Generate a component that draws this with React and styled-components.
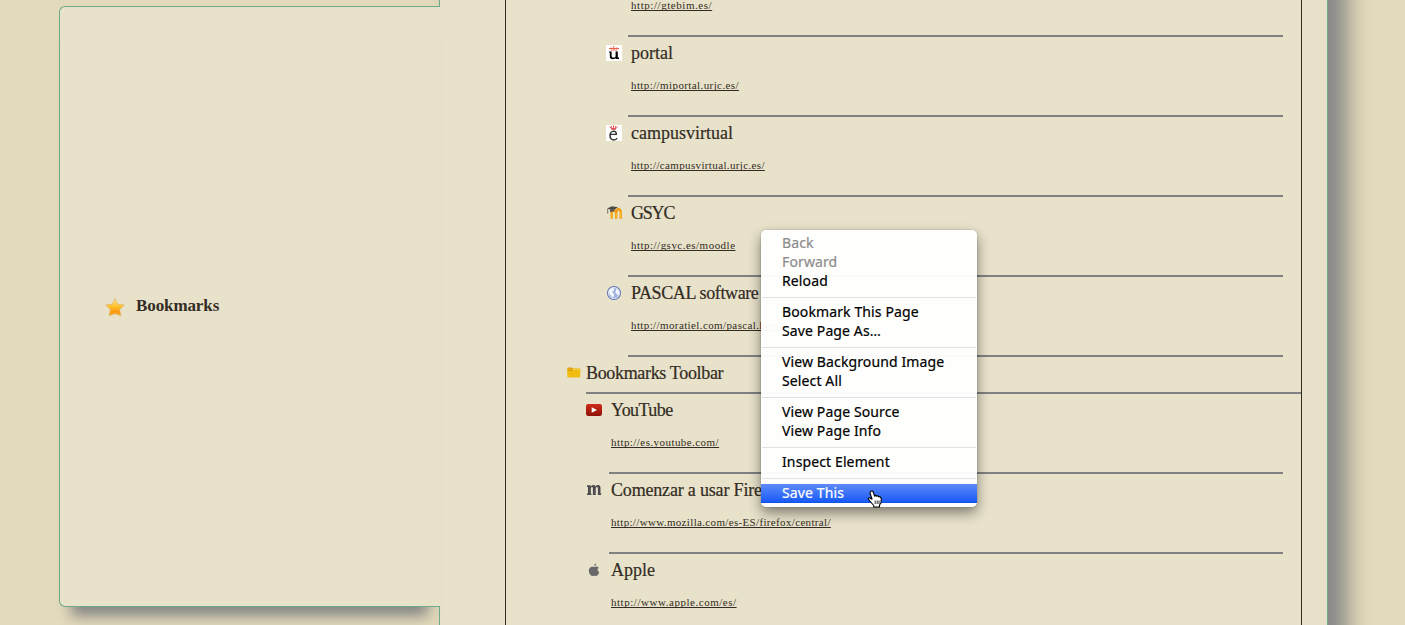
import React from "react";
import styled, { createGlobalStyle } from "styled-components";

const GlobalStyle = createGlobalStyle`
  * { box-sizing: border-box; }
  body {
    margin: 0;
    overflow: hidden;
    background: #e3dabb;
    color: #332c24;
    font-family: "Liberation Serif", serif;
  }
`;

const Page = styled.div`
  display: flex;
  height: 625px;
  padding-left: 59px;
  overflow: hidden;
`;

const SideTab = styled.aside`
  position: relative;
  z-index: 1;
  flex: none;
  display: flex;
  align-items: center;
  gap: 11px;
  width: 381px;
  height: 601px;
  margin: 6px -1px 0 0;
  padding-left: 45px;
  background: #e8e2ca;
  border: 1px solid #6eaa88;
  border-right: 0;
  border-radius: 6px 0 0 6px;
`;

const TabShadow = styled.div`
  position: absolute;
  z-index: 0;
  left: 59px;
  top: 6px;
  width: 381px;
  height: 601px;
  box-shadow: 0 21px 13px -12px #858585;
`;

const TabTitle = styled.h2`
  margin: 0 0 2px;
  font-size: 17px;
  line-height: 20px;
  letter-spacing: -0.1px;
`;

const Sheet = styled.main`
  flex: none;
  width: 889px;
  height: 705px;
  margin-top: -40px;
  padding: 0 25px 0 65px;
  background: #e8e2ca;
  border: 1px solid #6eaa88;
  box-shadow: 19px 0 22px 0 #868686;
`;

const Listing = styled.section`
  height: 100%;
  border: 1px solid #332c20;
  border-width: 0 1px;
  overflow: hidden;
  padding-top: 39px;
`;

const Group = styled.div`
  margin-top: ${(p) => p.$shift || 0}px;
`;

const Entry = styled.div`
  display: flex;
  height: 80px;
  padding: 0 18px 0 ${(p) => p.$indent}px;
`;

const IconCell = styled.div`
  flex: none;
  width: ${(p) => p.$width}px;
  padding-top: ${(p) => p.$top || 8}px;
  padding-left: ${(p) => p.$left || 0}px;
  svg { display: block; }
`;

const EntryBody = styled.div`
  flex: 1;
  padding: 5px 0 0 ${(p) => p.$pad}px;
  border-bottom: 2px solid #808080;
  white-space: nowrap;
`;

const Title = styled.div`
  height: 22px;
  font-size: 18px;
  line-height: 22px;
  letter-spacing: ${(p) => p.$spacing || 0}px;
  -webkit-text-stroke: 0.2px #332c24;
`;

const Link = styled.a`
  display: block;
  width: max-content;
  margin-top: 14px;
  font-size: 11px;
  line-height: 14px;
  letter-spacing: ${(p) => p.$spacing || 0}px;
  text-decoration: underline;
  text-underline-offset: 1px;
  text-decoration-skip-ink: none;
`;

const FolderRow = styled.div`
  display: flex;
  height: 37px;
  padding-left: 60px;
`;

const FolderTitle = styled.div`
  flex: 1;
  padding-top: 5px;
  border-bottom: 2px solid #808080;
`;

const Menu = styled.div`
  position: absolute;
  z-index: 3;
  left: 761px;
  top: 230px;
  width: 216px;
  padding: 4px 0;
  background: rgba(255, 255, 255, 0.96);
  border-radius: 5px;
  box-shadow: 0 6px 13px rgba(0, 0, 0, 0.45), 0 0 2px rgba(0, 0, 0, 0.25);
  font-family: "Noto Sans", sans-serif;
`;

const MenuItem = styled.div`
  height: 19px;
  padding-left: 21px;
  font-size: 14px;
  line-height: 18px;
  letter-spacing: 0.12px;
  white-space: nowrap;
  -webkit-text-stroke: 0.2px currentColor;
  color: ${(p) => (p.$active ? "#fff" : p.$disabled ? "#8c8c8c" : "#000")};
  background: ${(p) => (p.$active ? "linear-gradient(#5f8bf8, #1b5cf6 92%, #0f4fe0)" : "none")};
`;

const Separator = styled.div`
  height: 1px;
  margin: 6px 1px 5px;
  background: #e1e1e1;
`;

const Pointer = styled.svg`
  position: absolute;
  z-index: 4;
  left: 867px;
  top: 490px;
`;

const Star = () => (
  <svg width="20" height="20" viewBox="0 0 20 20">
    <defs>
      <linearGradient id="star" x1="0" y1="0" x2="0" y2="1">
        <stop offset="0" stopColor="#fff0a0" />
        <stop offset="0.4" stopColor="#ffc832" />
        <stop offset="0.75" stopColor="#fb9a10" />
        <stop offset="1" stopColor="#fba41c" />
      </linearGradient>
    </defs>
    <path d="M10 1.7 12.8 7.4 19.2 8 14.6 12.4 15.9 18.8 10 16.6 4.1 18.8 5.4 12.4 0.8 8 7.2 7.4Z" fill="url(#star)" stroke="#e2b25f" strokeWidth="0.8" strokeLinejoin="round" />
  </svg>
);

const CrownU = () => (
  <svg width="16" height="16" viewBox="0 0 16 16">
    <rect width="16" height="16" fill="#fff" />
    <path d="M3 3.5h10M5 2.4v2.2M7.8 1v4M10.7 2.4v2.2" stroke="#ee5a44" fill="none" />
    <path d="M5 5.6q3-1.2 6 0" stroke="#f08070" strokeWidth="0.8" fill="none" />
    <path d="M3 6.4H5.6V11Q5.6 12.6 7.2 12.6 9 12.6 9.6 11.4V6.4H11.8V12.6H13V14H10L9.8 13.2Q8.6 14.2 6.8 14.2 3.8 14.2 3.8 11.6V7.6H3Z" fill="#000" />
  </svg>
);

const CrownE = () => (
  <svg width="16" height="16" viewBox="0 0 16 16">
    <rect width="16" height="16" fill="#fff" />
    <path d="M3.6 1.4 5.2 3.5H10L11.4 1.4M5.6 1v2.5M7.5.5V4M9.4 1v2.5M5.4 4.5h4.2" stroke="#dc4a4e" strokeWidth="0.9" fill="none" />
    <path d="M4.6 9.4H10.4Q10.4 6.1 7.7 6.1 4.1 6.3 4.1 10.5T7.9 15q2 0 3.2-1.8" stroke="#333" strokeWidth="1.3" fill="none" />
    <path d="M4.2 8v5" stroke="#333" strokeWidth="0.9" />
  </svg>
);

const Moodle = () => (
  <svg width="16" height="16" viewBox="0 0 16 16">
    <path d="M5.7 13.7V8.2Q6 5.4 8.2 5.6 10.2 5.8 10.2 8.5V13.7M10.2 8.5Q10.2 4.2 12.2 4.2 14.7 4.2 14.7 7.5V13.7" stroke="#f09c12" strokeWidth="2.4" fill="none" />
    <path d="M5.8 8v5M10.2 8v5M14.5 7v6" stroke="#ffc630" strokeWidth="0.8" />
    <path d="M1 3.6 6 1.2 12 2.2 7 5.4Z" fill="#4c4a46" />
    <path d="M4 4.6v2.6l4.4-1.2V4" fill="#5c5a55" />
    <path d="M1.7 4v4.5" stroke="#77736a" />
  </svg>
);

const Globe = () => (
  <svg width="16" height="16" viewBox="0 0 16 16">
    <circle cx="8" cy="8" r="6.5" fill="#a4b4dc" stroke="#6373b2" strokeWidth="1.1" />
    <circle cx="8" cy="8" r="5.6" fill="none" stroke="#e7edfa" strokeWidth="0.8" />
    <path d="M3.6 4.6 6 3 8.4 3.6 7.5 6 5.8 6.8 7.5 8.4 8 10.4 6.8 13 5 10.6 3 8Z" fill="#f5f8fd" />
    <path d="M9.6 3.2 12.4 5 13.2 8 12 10.8 10.5 8.4 9.2 7.2 10.4 5.5Z" fill="#f5f8fd" />
  </svg>
);

const Folder = () => (
  <svg width="14" height="14" viewBox="0 0 14 14">
    <path d="M.5 2.5Q.5 1.5 1.5 1.5H5L6 2.5H12.5Q13.2 2.5 13.2 3.3V5H.5Z" fill="#dc9a10" />
    <rect x="0.3" y="2.8" width="13" height="8.6" rx="0.9" fill="#f0bc12" />
    <path d="M.8 4.2H5.6" stroke="#cf8a0a" strokeWidth="0.9" />
    <path d="M6 3.2H13" stroke="#fbdf68" strokeWidth="0.8" fill="none" />
  </svg>
);

const Video = () => (
  <svg width="16" height="16" viewBox="0 0 16 16">
    <defs>
      <linearGradient id="vid" x1="0" y1="0" x2="0" y2="1">
        <stop offset="0" stopColor="#d02a1a" />
        <stop offset="1" stopColor="#8e1207" />
      </linearGradient>
    </defs>
    <rect x="0" y="2" width="16" height="12" rx="2.2" fill="url(#vid)" />
    <path d="M5.7 5.2 11 8 5.7 10.8Z" fill="#fff" />
  </svg>
);

const MozM = () => (
  <svg width="16" height="16" viewBox="0 0 16 16">
    <path d="M1 3.2H4.6L5 4.4Q6 3 7.5 3 9 3 9.5 4.4 10.4 3 12 3 14.5 3 14.5 6V11.4H15.2V13H11.9V6.4Q11.9 5 10.8 5 9.7 5 9.7 6.6V13H6.9V6.4Q6.9 5 5.9 5 4.9 5 4.8 6.6V11.4H5.4V13H1V11.4H2V5H1Z" fill="#4b4b50" />
  </svg>
);

const AppleLogo = () => (
  <svg width="16" height="16" viewBox="0 0 16 16">
    <path d="M10.4 1.2Q10.5 3.7 8 4.3 7.9 2.1 10.4 1.2ZM8.2 5.1Q10.8 3.6 12.8 5.8 10 8 13.3 10.3 12.1 13.9 10.3 14.1 8.4 13.3 6.5 14.1C4.3 13.9 2.8 11.4 2.8 8.6 3 5 5.8 4.1 8.2 5.1Z" fill="#68686a" />
  </svg>
);

const university = [
  { url: "http://gtebim.es/", gap: 0.55 },
  { title: "portal", url: "http://miportal.urjc.es/", gap: 0.4, icon: <CrownU /> },
  { title: "campusvirtual", url: "http://campusvirtual.urjc.es/", gap: 0.36, icon: <CrownE /> },
  { title: "GSYC", spacing: -1.2, url: "http://gsyc.es/moodle", gap: 0.48, icon: <Moodle /> },
  { title: "PASCAL software", spacing: -0.38, url: "http://moratiel.com/pascal.html", gap: 0.39, icon: <Globe /> },
];

const toolbar = [
  { title: "YouTube", spacing: -0.55, url: "http://es.youtube.com/", gap: 0.44, icon: <Video /> },
  { title: "Comenzar a usar Firefox", spacing: -0.18, url: "http://www.mozilla.com/es-ES/firefox/central/", gap: 0.34, icon: <MozM /> },
  { title: "Apple", url: "http://www.apple.com/es/", gap: 0.53, icon: <AppleLogo /> },
];

const menu = [
  [["Back", { $disabled: true }], ["Forward", { $disabled: true }], ["Reload", {}]],
  [["Bookmark This Page", {}], ["Save Page As…", {}]],
  [["View Background Image", {}], ["Select All", {}]],
  [["View Page Source", {}], ["View Page Info", {}]],
  [["Inspect Element", {}]],
  [["Save This", { $active: true }]],
];

const Bookmark = ({ item, indent, iconWidth, pad }) => (
  <Entry $indent={indent}>
    <IconCell $width={iconWidth}>{item.icon}</IconCell>
    <EntryBody $pad={pad}>
      <Title $spacing={item.spacing}>{item.title}</Title>
      <Link $spacing={item.gap}>{item.url}</Link>
    </EntryBody>
  </Entry>
);

export default function App() {
  return (
    <>
      <GlobalStyle />
      <Page>
        <TabShadow />
        <SideTab>
          <Star />
          <TabTitle>Bookmarks</TabTitle>
        </SideTab>
        <Sheet>
          <Listing>
            <Group $shift={-43}>
              {university.map((b) => (
                <Bookmark key={b.url} item={b} indent={100} iconWidth={22} pad={3} />
              ))}
            </Group>
            <Group>
              <FolderRow>
                <IconCell $width={20} $top={9} $left={1}><Folder /></IconCell>
                <FolderTitle><Title $spacing={-0.33}>Bookmarks Toolbar</Title></FolderTitle>
              </FolderRow>
              {toolbar.map((b) => (
                <Bookmark key={b.url} item={b} indent={80} iconWidth={23} pad={2} />
              ))}
            </Group>
          </Listing>
        </Sheet>
      </Page>
      <Menu>
        {menu.map((section, i) => (
          <React.Fragment key={i}>
            {i > 0 && <Separator />}
            {section.map(([label, state]) => (
              <MenuItem key={label} {...state}>{label}</MenuItem>
            ))}
          </React.Fragment>
        ))}
      </Menu>
      <Pointer width="16" height="18" viewBox="0 0 16 18">
        <path d="M4 1.2Q5.5.5 6.2 2L7.6 6.2 8.3 5.2 9.8 6.3 10.8 5.6 11.9 7 13 6.6 14.3 8.3 14 13 12.5 15V17H6.7V15.5L3.7 12 1.3 9.2Q1 7.7 2.7 7.8L5 9.2 3 3Q3 1.5 4 1.2Z" fill="#fff" stroke="#000" strokeWidth="1.1" strokeLinejoin="round" />
        <path d="M8.2 10.5v3.5M10.2 10.5v3.5M12 10.5v3.5" stroke="#000" strokeWidth="0.8" />
      </Pointer>
    </>
  );
}
